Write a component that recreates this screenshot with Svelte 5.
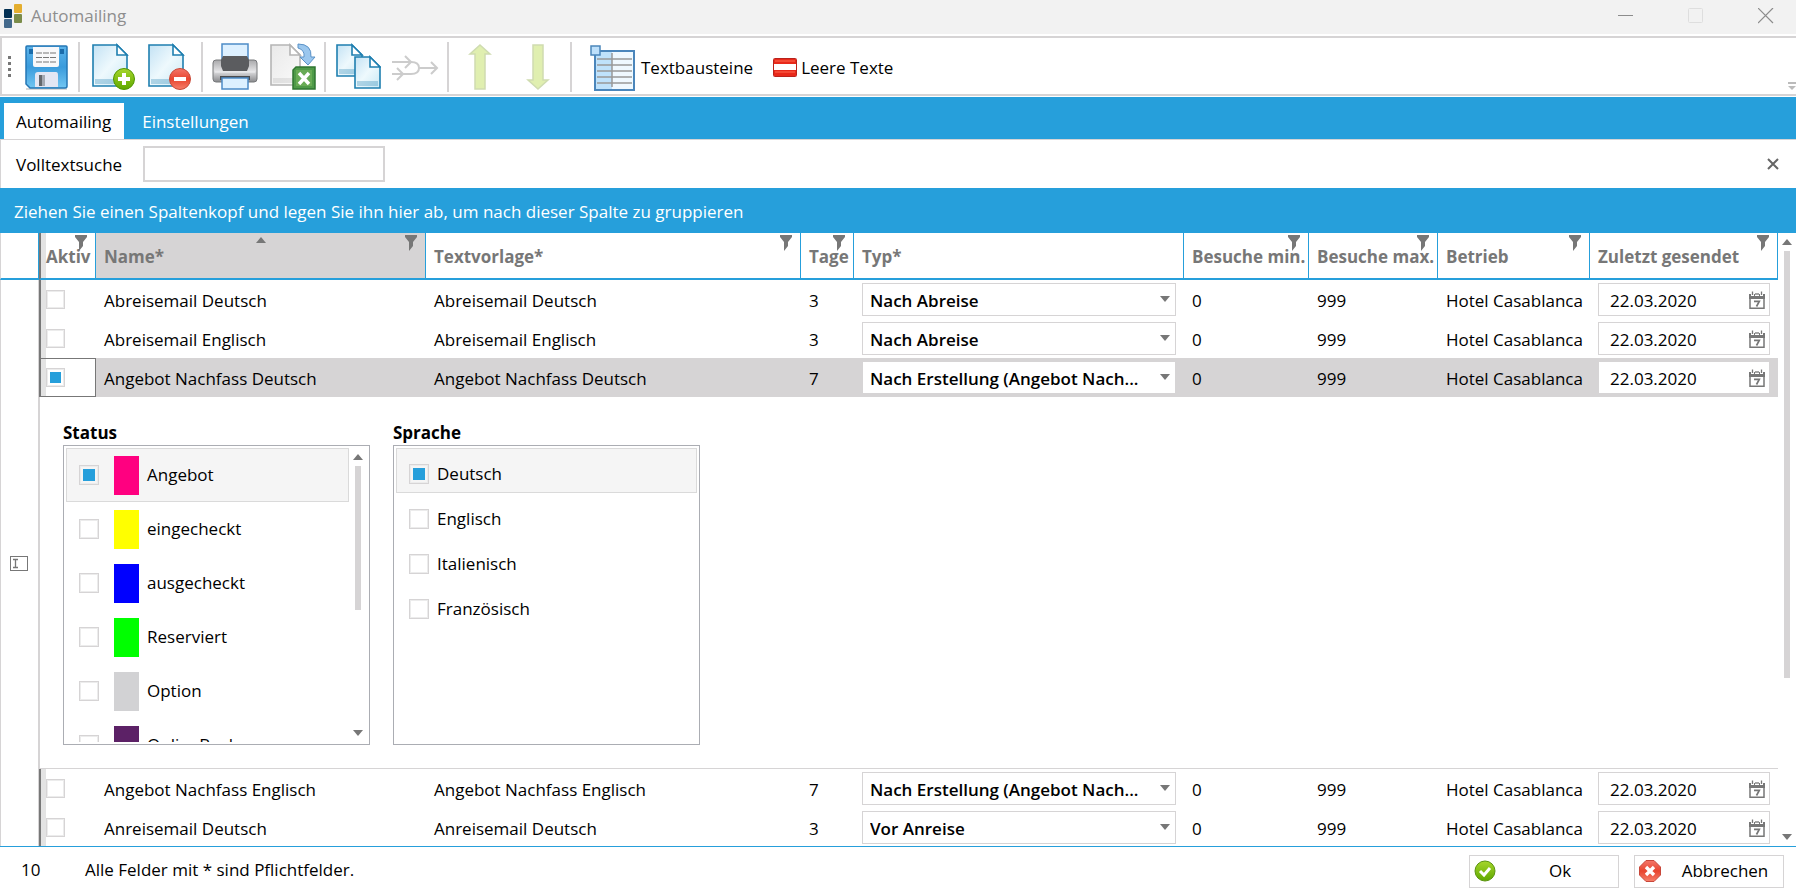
<script lang="ts">
type Row = {
	active: boolean;
	name: string;
	template: string;
	days: number;
	type: string;
	min: number;
	max: number;
	hotel: string;
	sent: string;
};

const columns = [
	{ label: 'Aktiv', filter: true, tight: true },
	{ label: 'Name*', filter: true, sorted: true },
	{ label: 'Textvorlage*', filter: true },
	{ label: 'Tage', filter: true },
	{ label: 'Typ*', filter: false },
	{ label: 'Besuche min.', filter: true },
	{ label: 'Besuche max.', filter: true },
	{ label: 'Betrieb', filter: true },
	{ label: 'Zuletzt gesendet', filter: true }
];

const types = ['Nach Abreise', 'Nach Erstellung (Angebot Nach...', 'Vor Anreise'];

function makeRow(name: string, days: number, type: string, active = false): Row {
	return {
		active,
		name,
		template: name,
		days,
		type,
		min: 0,
		max: 999,
		hotel: 'Hotel Casablanca',
		sent: '22.03.2020'
	};
}

let rows = $state<Row[]>([
	makeRow('Abreisemail Deutsch', 3, types[0]),
	makeRow('Abreisemail Englisch', 3, types[0]),
	makeRow('Angebot Nachfass Deutsch', 7, types[1], true),
	makeRow('Angebot Nachfass Englisch', 7, types[1]),
	makeRow('Anreisemail Deutsch', 3, types[2])
]);

let statuses = $state([
	{ label: 'Angebot', color: '#ff0080', checked: true },
	{ label: 'eingecheckt', color: '#ffff00', checked: false },
	{ label: 'ausgecheckt', color: '#0000ff', checked: false },
	{ label: 'Reserviert', color: '#00ff00', checked: false },
	{ label: 'Option', color: '#d2d2d4', checked: false },
	{ label: 'OnlineBuchung', color: '#5c2166', checked: false }
]);

let languages = $state([
	{ label: 'Deutsch', checked: true },
	{ label: 'Englisch', checked: false },
	{ label: 'Italienisch', checked: false },
	{ label: 'Französisch', checked: false }
]);

let selected = $state(2);
let search = $state('');
</script>

{#snippet page(x: number, y: number, w: number, h: number, paper = 'url(#paper)', line = '#1f7fb0')}
	<g transform="translate({x} {y})">
		<path d="M1 1H{w - 11}L{w - 1} 11V{h - 1}H1Z" fill={paper} stroke={line} stroke-width="1.6" />
		<path d="M3 {h - 8}H{w - 3}V{h - 3}H3Z" fill={line} opacity="0.3" />
		<path d="M{w - 11} 1V11H{w - 1}Z" fill="#fff" stroke={line} stroke-width="1.6" />
	</g>
{/snippet}

{#snippet triangle(up: boolean)}
	<svg class="tri" width="10" height="6" viewBox="0 0 10 6" aria-hidden="true">
		<path d={up ? 'M5 0L10 6H0Z' : 'M0 0H10L5 6Z'} fill="#777" />
	</svg>
{/snippet}

{#snippet cells(row: Row)}
	<td class="check">
		<input type="checkbox" class="box small" aria-label="Aktiv" bind:checked={row.active} />
	</td>
	<td>{row.name}</td>
	<td>{row.template}</td>
	<td>{row.days}</td>
	<td class="field">
		<div class="combo">
			<select bind:value={row.type} aria-label="Typ">
				{#each types as type}
					<option value={type}>{type}</option>
				{/each}
			</select>
			{@render triangle(false)}
		</div>
	</td>
	<td>{row.min}</td>
	<td>{row.max}</td>
	<td>{row.hotel}</td>
	<td class="field">
		<div class="date">
			<input type="text" bind:value={row.sent} aria-label="Zuletzt gesendet" />
			<button type="button" aria-label="Kalender">
				<svg width="16" height="18" viewBox="0 0 16 18">
					<path d="M1 7V17.2H15V7" fill="none" stroke="#777" stroke-width="1.5" />
					<path d="M0 3H2V5H5V3H6V5H10V3H11V5H14V3H16V8H0Z" fill="#777" />
					<path d="M3.5 0.5V4M12.5 0.5V4M7 2V4M9 2V4" stroke="#777" stroke-width="1.3" />
					<path d="M5 10.3H10.3L7.5 15.5" fill="none" stroke="#777" stroke-width="1.7" />
				</svg>
			</button>
		</div>
	</td>
{/snippet}

<svg class="defs" width="0" height="0" aria-hidden="true">
	<defs>
		<linearGradient id="paper" x1="0" y1="0" x2="1" y2="1">
			<stop offset="0" stop-color="#c3e2f4" />
			<stop offset="0.5" stop-color="#eef9fd" />
			<stop offset="1" stop-color="#c9e8f4" />
		</linearGradient>
		<linearGradient id="grey-paper" x1="0" y1="0" x2="1" y2="1">
			<stop offset="0" stop-color="#e9e9e9" />
			<stop offset="1" stop-color="#fafafa" />
		</linearGradient>
		<linearGradient id="disk" x1="0" y1="0" x2="0" y2="1">
			<stop offset="0" stop-color="#5db4ea" />
			<stop offset="0.5" stop-color="#3a9bdc" />
			<stop offset="1" stop-color="#72c6f2" />
		</linearGradient>
		<linearGradient id="metal" x1="0" y1="0" x2="0" y2="1">
			<stop offset="0" stop-color="#a8a8aa" />
			<stop offset="0.5" stop-color="#e2e2e4" />
			<stop offset="1" stop-color="#88898c" />
		</linearGradient>
		<linearGradient id="lime" x1="0" y1="0" x2="0" y2="1">
			<stop offset="0" stop-color="#a6d62c" />
			<stop offset="1" stop-color="#5fa800" />
		</linearGradient>
		<linearGradient id="red" x1="0" y1="0" x2="0" y2="1">
			<stop offset="0" stop-color="#f4776a" />
			<stop offset="0.5" stop-color="#e8452f" />
			<stop offset="1" stop-color="#f6806b" />
		</linearGradient>
	</defs>
</svg>

<div class="window">
	<header class="titlebar">
		<svg width="18" height="24" viewBox="0 0 18 24" aria-hidden="true">
			<rect x="0" y="5" width="8" height="9" rx="1" fill="#022f52" />
			<rect x="10" y="0" width="8" height="9" rx="1" fill="#e4ae2f" />
			<rect x="0" y="15" width="8" height="9" rx="1" fill="#446a8c" />
			<rect x="10" y="10" width="8" height="9" rx="1" fill="#7b8c49" />
		</svg>
		<h1>Automailing</h1>
		<div class="window-buttons">
			<button type="button" aria-label="Minimieren">
				<svg width="16" height="16" viewBox="0 0 16 16"><path d="M0 7.5H15" stroke="#8c8c8c" /></svg>
			</button>
			<button type="button" aria-label="Maximieren" disabled>
				<svg width="16" height="16" viewBox="0 0 16 16">
					<rect x="0.5" y="0.5" width="14" height="14" rx="1" fill="none" stroke="#dedede" />
				</svg>
			</button>
			<button type="button" aria-label="Schließen">
				<svg width="16" height="16" viewBox="0 0 16 16"><path d="M0 0L15 15M15 0L0 15" stroke="#8c8c8c" stroke-width="1.2" /></svg>
			</button>
		</div>
	</header>

	<div class="toolbar" role="toolbar" aria-label="Werkzeuge">
		<div class="grip"><i></i><i></i><i></i><i></i></div>
		<button type="button" class="tool" aria-label="Speichern">
			<svg width="48" height="48" viewBox="0 0 48 48">
				<path d="M4 46H45" stroke="#000" stroke-width="2" opacity="0.15" />
				<path d="M5 3H44Q45 3 45 4V43Q45 45 43 45H8L4 41V4Q4 3 5 3Z" fill="url(#disk)" stroke="#2577b5" stroke-width="1.5" />
				<path d="M7 6H11V11H7ZM38 6H42V11H38Z" fill="#1b6cab" />
				<path d="M11 4H37V22Q37 24 35 24H13Q11 24 11 22Z" fill="#f8f8fa" />
				<path d="M14 10H34M14 14.5H34M14 19H34" stroke="#777" stroke-width="1.2" stroke-dasharray="6 1" />
				<path d="M13 32Q13 29 16 29H34Q36 29 36 32V44H13Z" fill="#e3e6f3" />
				<path d="M17 32H23V43H17Z" fill="#63676d" />
				<path d="M20 32H23V43H20Z" fill="#a4a9b3" />
			</svg>
		</button>
		<span class="sep"></span>
		<button type="button" class="tool" aria-label="Neu">
			<svg width="48" height="48" viewBox="0 0 48 48">
				{@render page(5, 1, 36, 43)}
				<circle cx="37" cy="36" r="10.5" fill="url(#lime)" stroke="#509600" />
				<path d="M37 30V42M31 36H43" stroke="#fff" stroke-width="4" />
			</svg>
		</button>
		<button type="button" class="tool" aria-label="Löschen">
			<svg width="48" height="48" viewBox="0 0 48 48">
				{@render page(3, 1, 36, 43)}
				<circle cx="35" cy="36" r="10.5" fill="url(#red)" stroke="#c94a38" />
				<path d="M29 36H41" stroke="#fff" stroke-width="4" />
			</svg>
		</button>
		<span class="sep"></span>
		<button type="button" class="tool" aria-label="Drucken">
			<svg width="48" height="48" viewBox="0 0 48 48">
				<rect x="3" y="17" width="44" height="22" rx="3" fill="url(#metal)" stroke="#77787b" />
				<path d="M5 29H45" stroke="#fff" opacity="0.6" />
				<rect x="12" y="1" width="26" height="18" fill="#ddf0ff" stroke="#4d8cc8" stroke-width="1.5" />
				<path d="M13 13H37L39 17V23L37 28H13L11 23V17Z" fill="#5b5c5f" />
				<rect x="10" y="33" width="30" height="4" fill="#4a4b4e" />
				<rect x="12" y="35" width="26" height="11" fill="#ddf0ff" stroke="#4d8cc8" stroke-width="1.5" />
			</svg>
		</button>
		<button type="button" class="tool" aria-label="Excel-Export">
			<svg width="48" height="48" viewBox="0 0 48 48">
				{@render page(2, 1, 31, 42, 'url(#grey-paper)', '#b5b5b5')}
				<path d="M30 1Q44 1 43 14H47L40 22L32 14H36Q37 7 30 5Z" fill="#9bc7ee" stroke="#5b92c7" />
				<path d="M28 24H47V46H25V27Z" fill="#4f9a48" stroke="#2f7530" stroke-width="1.5" />
				<path d="M28 27H44V43H28Z" fill="#68ab55" />
				<path d="M31 30L41 41M41 30L31 41" stroke="#fff" stroke-width="3.4" />
			</svg>
		</button>
		<span class="sep"></span>
		<button type="button" class="tool" aria-label="Kopieren">
			<svg width="48" height="48" viewBox="0 0 48 48">
				{@render page(3, 1, 27, 33)}
				{@render page(21, 13, 27, 33)}
			</svg>
		</button>
		<button type="button" class="tool" aria-label="Zusammenführen" disabled>
			<svg width="48" height="48" viewBox="0 0 48 48">
				<g fill="none" stroke="#ccc" stroke-width="2">
					<path d="M1 19H20Q28 19 28 25Q28 31 20 31H1M28 25H46" />
					<path d="M14 13L20 19L14 25M6 25L12 31L6 37M40 19L46 25L40 31" />
				</g>
			</svg>
		</button>
		<span class="sep"></span>
		<button type="button" class="tool" aria-label="Nach oben" disabled>
			<svg width="48" height="48" viewBox="0 0 48 48">
				<path d="M24 2L34 11H29V46H19V11H14Z" fill="#e0efb0" stroke="#cfdcb0" stroke-width="1.5" />
			</svg>
		</button>
		<button type="button" class="tool" aria-label="Nach unten" disabled>
			<svg width="48" height="48" viewBox="0 0 48 48">
				<path d="M24 46L34 37H29V2H19V37H14Z" fill="#e0efb0" stroke="#cfdcb0" stroke-width="1.5" />
			</svg>
		</button>
		<span class="sep"></span>
		<button type="button" class="tool text">
			<svg width="48" height="48" viewBox="0 0 48 48" aria-hidden="true">
				<rect x="7" y="7" width="39" height="39" fill="#eff9ff" stroke="#4b86bb" stroke-width="2" />
				<path d="M8 8H24V45H8Z" fill="#bfe2fb" />
				<path d="M9 15H44M9 21H44M9 27H44M9 33H44M9 39H44M24 9V43" stroke="#999" stroke-width="1.5" />
				<rect x="3" y="2" width="9" height="9" fill="#bde0fb" stroke="#4b86bb" stroke-width="1.5" />
			</svg>
			Textbausteine
		</button>
		<button type="button" class="tool flag">
			<svg width="24" height="19" viewBox="0 0 24 19" aria-hidden="true">
				<rect x="0.5" y="0.5" width="23" height="18" rx="1" fill="#fff" stroke="#b9221b" />
				<path d="M1 1H23V6H1ZM1 12H23V18H1Z" fill="#e8291a" />
				<path d="M2 3H22M2 14H22" stroke="#ff6a50" />
			</svg>
			Leere Texte
		</button>
		<svg class="overflow" width="8" height="8" viewBox="0 0 8 8" aria-hidden="true">
			<path d="M0 0H8V2H0ZM0 4H8L4 8Z" fill="#bbb" />
		</svg>
	</div>

	<nav class="tabs">
		<button type="button" class="tab current">Automailing</button>
		<button type="button" class="tab">Einstellungen</button>
	</nav>

	<div class="search">
		<label for="fulltext">Volltextsuche</label>
		<input id="fulltext" type="text" bind:value={search} />
		<button type="button" aria-label="Suche schließen">
			<svg width="12" height="12" viewBox="0 0 12 12"><path d="M1 1L11 11M11 1L1 11" stroke="#666" stroke-width="2" /></svg>
		</button>
	</div>

	<div class="group-panel">Ziehen Sie einen Spaltenkopf und legen Sie ihn hier ab, um nach dieser Spalte zu gruppieren</div>

	<div class="grid">
		<div class="viewport">
			<table>
				<colgroup>
					<col class="c-mark" />
					<col class="c-active" />
					<col class="c-wide" />
					<col />
					<col class="c-days" />
					<col class="c-wide" />
					<col class="c-min" />
					<col class="c-max" />
					<col class="c-hotel" />
					<col class="c-sent" />
				</colgroup>
				<thead>
					<tr>
						<th class="mark"></th>
						{#each columns as col}
							<th class:sorted={col.sorted} class:tight={col.tight}>
								<div class="head">
									{col.label}
									{#if col.sorted}
										<span class="sort">{@render triangle(true)}</span>
									{/if}
									{#if col.filter}
										<svg class="filter" width="12" height="16" viewBox="0 0 12 16" aria-hidden="true">
											<path d="M0 0H12V2L8 7V11L4 16V7L0 2Z" fill="#777" />
										</svg>
									{/if}
								</div>
							</th>
						{/each}
					</tr>
				</thead>
				<tbody>
					{#each rows as row, i}
						<tr class:selected={i === selected} onclick={() => (selected = i)}>
							<td class="mark" rowspan={i === selected ? 2 : 1}>
								{#if i === selected}
									<svg width="18" height="15" viewBox="0 0 18 15" aria-hidden="true">
										<rect x="0.5" y="0.5" width="17" height="14" fill="#fff" stroke="#777" />
										<path d="M3 3.5H8M3 11.5H8M5.5 3V12" stroke="#777" stroke-width="1.3" />
									</svg>
								{/if}
							</td>
							{@render cells(row)}
						</tr>
						{#if i === selected}
							<tr class="detail">
								<td colspan="9">
									<div class="lists">
										<fieldset>
											<legend>Status</legend>
											<div class="list">
												<div class="items">
													{#each statuses as status, s}
														<label class="status" class:current={s === 0}>
															<input type="checkbox" class="box" bind:checked={status.checked} />
															<span class="swatch" style="background: {status.color}"></span>
															{status.label}
														</label>
													{/each}
												</div>
												<div class="scroll" aria-hidden="true">
													{@render triangle(true)}
													<div class="track"><span class="thumb"></span></div>
													{@render triangle(false)}
												</div>
											</div>
										</fieldset>
										<fieldset>
											<legend>Sprache</legend>
											<div class="list">
												<div class="items">
													{#each languages as lang, l}
														<label class="lang" class:current={l === 0}>
															<input type="checkbox" class="box" bind:checked={lang.checked} />
															{lang.label}
														</label>
													{/each}
												</div>
											</div>
										</fieldset>
									</div>
								</td>
							</tr>
						{/if}
					{/each}
				</tbody>
			</table>
		</div>
		<div class="scroll" aria-hidden="true">
			{@render triangle(true)}
			<div class="track"><span class="thumb long"></span></div>
			{@render triangle(false)}
		</div>
	</div>

	<footer>
		<span class="count">10</span>
		<span>Alle Felder mit * sind Pflichtfelder.</span>
		<div class="actions">
			<button type="button">
				<svg width="22" height="22" viewBox="0 0 22 22" aria-hidden="true">
					<circle cx="11" cy="11" r="10" fill="url(#lime)" stroke="#5b9410" />
					<path d="M6 11L10 15L16 8" fill="none" stroke="#fff" stroke-width="3" />
				</svg>
				<span>Ok</span>
			</button>
			<button type="button">
				<svg width="22" height="22" viewBox="0 0 22 22" aria-hidden="true">
					<path d="M7 0.5H15L21.5 7V15L15 21.5H7L0.5 15V7Z" fill="url(#red)" stroke="#c8473a" />
					<path d="M7 7L15 15M15 7L7 15" stroke="#fff" stroke-width="3.4" />
				</svg>
				<span>Abbrechen</span>
			</button>
		</div>
	</footer>
</div>

<style>
	:global(body) {
		background: #fff;
	}
	.defs {
		position: absolute;
	}
	.window {
		--blue: #269fdb;
		--line: #d6d4d5;
		display: flex;
		flex-direction: column;
		height: 100vh;
		color: #000;
		font: 17px/24px 'Open Sans', 'Noto Sans', sans-serif;
	}
	button,
	input,
	select {
		font: inherit;
		color: inherit;
		box-sizing: border-box;
		margin: 0;
		border: 0;
		border-radius: 0;
		padding: 0;
		background: none;
	}
	svg {
		display: block;
		flex: none;
	}

	.titlebar {
		display: flex;
		align-items: center;
		gap: 9px;
		height: 34px;
		padding: 0 22px 3px 4px;
		box-sizing: border-box;
		margin-bottom: 2px;
		background: #f2f2f2;
		color: #8e8e8e;
	}
	h1 {
		margin: 0;
		font: inherit;
	}
	.window-buttons {
		display: flex;
		gap: 54px;
		margin-left: auto;
	}

	.toolbar {
		display: flex;
		align-items: center;
		height: 55px;
		padding-top: 1px;
		border: 2px solid var(--line);
		border-right: 0;
		margin-bottom: 1px;
	}
	.grip {
		display: grid;
		gap: 3px;
		width: 9px;
		padding-left: 6px;
	}
	.grip i {
		width: 3px;
		height: 3px;
		background: #777;
	}
	.tool {
		display: flex;
		align-items: center;
		justify-content: center;
		gap: 5px;
		width: 58px;
		white-space: nowrap;
	}
	.tool.text,
	.tool.flag {
		width: auto;
		padding: 2px 8px 0 14px;
	}
	.tool.flag {
		gap: 4px;
		padding-left: 12px;
	}
	.sep {
		width: 2px;
		height: 50px;
		margin: 0 2px 0 3px;
		background: var(--line);
	}
	.overflow {
		align-self: flex-end;
		margin: 0 0 4px auto;
	}

	.tabs {
		display: flex;
		height: 36px;
		padding: 6px 4px 0;
		background: var(--blue);
	}
	.tab {
		padding: 2px 18px 0;
		color: #fff;
	}
	.tab.current {
		padding: 2px 13px 0 12px;
		background: #fff;
		color: #000;
	}

	.search {
		display: flex;
		align-items: center;
		height: 48px;
		padding: 0 17px 0 15px;
		border-top: 1px solid var(--line);
		border-left: 1px solid var(--line);
	}
	.search label {
		width: 127px;
		padding-top: 2px;
	}
	.search input {
		width: 242px;
		height: 36px;
		padding: 0 6px;
		border: 2px solid var(--line);
	}
	.search button {
		margin-left: auto;
	}
	.group-panel {
		padding: 12px 14px 9px;
		background: var(--blue);
		color: #fff;
	}

	.grid {
		flex: 1;
		display: flex;
		min-height: 0;
		border-bottom: 1px solid var(--blue);
	}
	.viewport {
		flex: 1;
		min-width: 0;
		overflow: hidden;
	}
	table {
		width: 100%;
		table-layout: fixed;
		border-collapse: separate;
		border-spacing: 0;
	}
	.c-mark {
		width: 39px;
	}
	.c-active {
		width: 57px;
	}
	.c-wide {
		width: 330px;
	}
	.c-days {
		width: 53px;
	}
	.c-min {
		width: 125px;
	}
	.c-max {
		width: 129px;
	}
	.c-hotel {
		width: 152px;
	}
	.c-sent {
		width: 188px;
	}
	th {
		padding: 0;
		border-right: 1px solid var(--blue);
		border-bottom: 2px solid var(--blue);
		color: #777;
		font-weight: 700;
		text-align: left;
		white-space: nowrap;
	}
	th.mark {
		border-left: 1px solid var(--line);
	}
	th.sorted {
		background: var(--line);
	}
	th.tight {
		border-left: 2px solid #777;
		background: linear-gradient(90deg, #e3e3e3 5px, #fff 5px);
	}
	.head {
		position: relative;
		height: 33px;
		padding: 12px 0 0 8px;
	}
	.tight .head {
		padding-left: 5px;
	}
	.filter {
		position: absolute;
		top: 2px;
		right: 8px;
	}
	.sort {
		position: absolute;
		top: 4px;
		left: calc(50% - 5px);
	}
	td {
		height: 37px;
		padding: 2px 8px 0;
		white-space: nowrap;
	}
	td.field {
		height: 39px;
		padding: 0 8px;
	}
	td.mark {
		padding: 0 0 0 9px;
		border-left: 1px solid var(--line);
		border-right: 1px solid var(--line);
	}
	td.check {
		padding: 0 0 0 5px;
		border-left: 2px solid #777;
		background: linear-gradient(90deg, #e3e3e3 5px, #fff 5px);
	}
	.selected td:not(.mark, .check) {
		background-color: var(--line);
	}
	.selected td.check {
		outline: 1px solid #777;
		outline-offset: -1px;
	}

	.box {
		display: block;
		appearance: none;
		flex: none;
		width: 20px;
		height: 20px;
		border: 1px solid var(--line);
		box-shadow: inset 0 0 0 1px #ececec;
		background-color: #fff;
	}
	.box.small {
		width: 19px;
		height: 19px;
	}
	.box:checked {
		padding: 3px;
		background: var(--blue) content-box;
	}

	.combo {
		position: relative;
	}
	.combo .tri {
		position: absolute;
		top: 13px;
		right: 6px;
		pointer-events: none;
	}
	select {
		appearance: none;
		display: block;
		width: 100%;
		height: 33px;
		padding: 2px 24px 0 7px;
		border: 1px solid var(--line);
		background: #fff;
		font-weight: 600;
		text-overflow: ellipsis;
	}
	.date {
		display: flex;
		align-items: center;
		height: 31px;
		padding: 0 4px 0 11px;
		border: 1px solid var(--line);
		background: #fff;
	}
	.date input {
		flex: 1;
		min-width: 0;
		padding-top: 2px;
	}

	.detail td {
		height: 371px;
		padding: 0 23px;
		border-left: 1px solid var(--line);
		border-bottom: 1px solid var(--line);
		vertical-align: top;
	}
	.lists {
		display: flex;
		gap: 23px;
		padding-top: 24px;
	}
	fieldset {
		margin: 0;
		padding: 0;
		border: 0;
		min-width: 0;
	}
	legend {
		padding: 0;
		font-weight: 700;
	}
	.list {
		display: flex;
		box-sizing: border-box;
		width: 307px;
		height: 300px;
		padding: 2px;
		border: 1px solid #abadb3;
	}
	.items {
		flex: 1;
		overflow: hidden;
	}
	.items label {
		display: flex;
		align-items: center;
		gap: 8px;
		box-sizing: border-box;
		padding-left: 12px;
		border: 1px solid transparent;
	}
	.items .status {
		height: 54px;
	}
	.items .lang {
		height: 45px;
		padding-top: 6px;
	}
	.items .current {
		border-color: #dadada;
		background: #f5f5f5;
	}
	.swatch {
		width: 25px;
		height: 39px;
		margin-left: 7px;
	}

	.scroll {
		display: flex;
		flex-direction: column;
		align-items: center;
		width: 18px;
		padding: 6px 0;
	}
	.track {
		flex: 1;
		padding: 6px 0;
	}
	.thumb {
		display: block;
		width: 6px;
		height: 56%;
		background: var(--line);
	}
	.thumb.long {
		height: 74%;
	}

	footer {
		display: flex;
		align-items: center;
		height: 46px;
		padding: 1px 12px 0 21px;
	}
	footer > span {
		padding-bottom: 3px;
	}
	.count {
		width: 64px;
	}
	.actions {
		display: flex;
		gap: 15px;
		margin-left: auto;
	}
	.actions button {
		display: flex;
		align-items: center;
		gap: 10px;
		width: 150px;
		height: 33px;
		padding: 0 4px;
		border: 1px solid var(--line);
	}
	.actions span {
		flex: 1;
		text-align: center;
	}
</style>
